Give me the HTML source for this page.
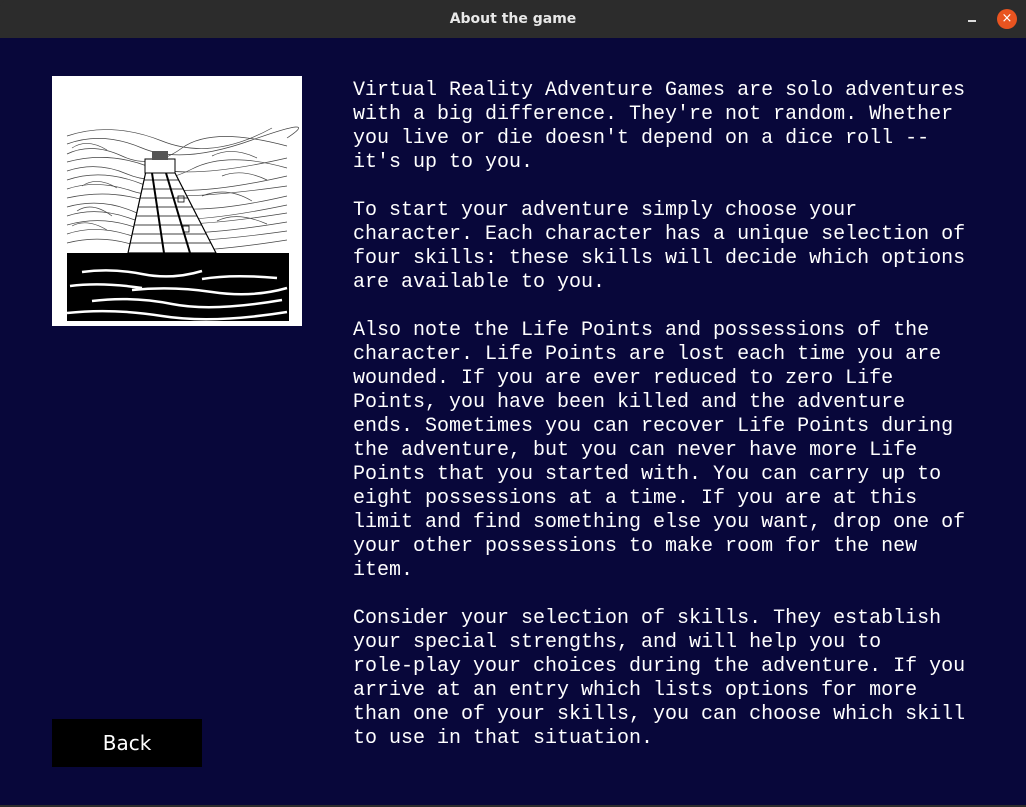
<!DOCTYPE html>
<html><head><meta charset="utf-8"><style>
html,body{margin:0;padding:0;width:1026px;height:807px;overflow:hidden;background:#2c2c2c;}
#tb{position:absolute;left:0;top:0;width:1026px;height:38px;background:#2c2c2c;border-radius:8px 8px 0 0;}
#tb .t{position:absolute;left:0;width:1026px;top:11px;text-align:center;color:#e8e8e8;font:bold 14px "DejaVu Sans","Liberation Sans",sans-serif;}
#min{position:absolute;left:968px;top:20px;width:8px;height:1.5px;background:#ddd;}
#cl{position:absolute;left:997px;top:9px;width:20px;height:20px;border-radius:50%;background:#e95420;color:#fff;font:13px "DejaVu Sans",sans-serif;text-align:center;line-height:20px;}
#main{position:absolute;left:0;top:38px;width:1026px;height:767px;background:#08073a;}
#img{position:absolute;left:52px;top:76px;width:250px;height:250px;background:#fff;}
#txt{position:absolute;left:353px;top:79px;width:640px;color:#fff;font:20px/24px "Liberation Mono",monospace;white-space:pre;}
#back{position:absolute;left:52px;top:719px;width:150px;height:48px;background:#000;color:#fff;font:20px/48px "DejaVu Sans","Liberation Sans",sans-serif;text-align:center;}
</style></head><body>
<div id="tb"><div class="t">About the game</div><div id="min"></div><div id="cl">×</div></div>
<div id="main"></div>
<div id="img"><svg width="250" height="250" viewBox="0 0 250 250">
<g stroke="#444" stroke-width="0.7" fill="none">
<path d="M15 60 Q60 45 110 65 T220 52"/><path d="M15 68 Q50 55 90 72 T200 64 T235 62"/>
<path d="M15 78 Q40 66 70 80 T130 72 T235 70"/><path d="M15 86 Q55 75 95 90 T235 82"/>
<path d="M15 95 Q45 85 75 98 T140 93 T235 92"/><path d="M15 104 Q50 92 90 108 T235 100"/>
<path d="M15 113 Q45 103 80 115 T235 110"/><path d="M15 122 Q60 112 100 127 T235 120"/>
<path d="M15 131 Q50 121 85 137 T235 129"/><path d="M15 140 Q45 130 80 143 T235 137"/>
<path d="M15 149 Q50 139 85 152 T235 146"/><path d="M15 158 Q45 148 80 160 T235 155"/>
<path d="M15 167 Q50 158 85 170 T235 164"/>
<path d="M20 72 Q35 62 55 74"/><path d="M160 80 Q180 70 205 82"/><path d="M150 120 Q175 110 200 125"/>
<path d="M25 135 Q40 125 60 140"/><path d="M165 145 Q185 135 215 148"/><path d="M30 110 Q45 100 65 112"/>
<path d="M170 100 Q190 92 215 104"/><path d="M20 150 Q35 142 55 154"/>
</g>
<path d="M76 177 L94 95 L122 95 L164 177 Z" fill="#fff" stroke="#000" stroke-width="1.2"/>
<rect x="93" y="83" width="30" height="14" fill="#fff" stroke="#000"/>
<rect x="100" y="75" width="16" height="9" fill="#555"/>
<g stroke="#000" stroke-width="0.8">
<line x1="92" y1="104" x2="127" y2="104"/><line x1="90" y1="113" x2="132" y2="113"/>
<line x1="88" y1="122" x2="136" y2="122"/><line x1="86" y1="131" x2="141" y2="131"/><line x1="84" y1="140" x2="145" y2="140"/>
<line x1="82" y1="149" x2="150" y2="149"/><line x1="80" y1="158" x2="154" y2="158"/><line x1="78" y1="167" x2="159" y2="167"/>
<line x1="100" y1="97" x2="112" y2="177" stroke-width="2"/><line x1="114" y1="97" x2="138" y2="177" stroke-width="2"/>
<rect x="126" y="120" width="6" height="6" fill="none"/><rect x="131" y="150" width="6" height="6" fill="none"/>
</g>
<rect x="15" y="177" width="222" height="68" fill="#000"/>
<g stroke="#fff" stroke-width="2.5" fill="none">
<path d="M30 196 Q60 192 90 198 T150 195"/><path d="M150 203 Q180 198 225 202"/>
<path d="M18 210 Q50 206 90 212"/><path d="M80 214 Q120 210 160 216 T235 212"/>
<path d="M40 225 Q80 220 120 228 T230 224"/><path d="M15 237 Q60 232 110 240 T235 236"/>
</g>
</svg></div>
<div id="txt">Virtual Reality Adventure Games are solo adventures
with a big difference. They're not random. Whether
you live or die doesn't depend on a dice roll --
it's up to you.

To start your adventure simply choose your
character. Each character has a unique selection of
four skills: these skills will decide which options
are available to you.

Also note the Life Points and possessions of the
character. Life Points are lost each time you are
wounded. If you are ever reduced to zero Life
Points, you have been killed and the adventure
ends. Sometimes you can recover Life Points during
the adventure, but you can never have more Life
Points that you started with. You can carry up to
eight possessions at a time. If you are at this
limit and find something else you want, drop one of
your other possessions to make room for the new
item.

Consider your selection of skills. They establish
your special strengths, and will help you to
role-play your choices during the adventure. If you
arrive at an entry which lists options for more
than one of your skills, you can choose which skill
to use in that situation.</div>
<div id="back">Back</div>
</body></html>
